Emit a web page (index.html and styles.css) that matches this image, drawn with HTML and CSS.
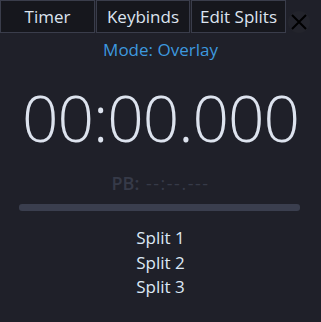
FILE: index.html
```html
<!DOCTYPE html>
<html>
<head>
<meta charset="utf-8">
<link rel="stylesheet" href="styles.css">
</head>
<body>
<div class="app">
  <div class="topbar">
    <div class="tabs">
      <div class="tab tab-a">Timer</div>
      <div class="tab tab-b">Keybinds</div>
      <div class="tab tab-c">Edit Splits</div>
    </div>
    <div class="close">
      <svg width="22" height="22" viewBox="0 0 22 22"><path d="M4 4 L18 18 M18 4 L4 18" stroke="#000" stroke-width="2" fill="none"/></svg>
    </div>
  </div>
  <div class="mode">Mode: Overlay</div>
  <div class="timer">00:00.000</div>
  <div class="pb"><b>PB:</b> <span class="pb-time">--:--.---</span></div>
  <div class="bar"></div>
  <div class="splits">
    <div class="split">Split 1</div>
    <div class="split">Split 2</div>
    <div class="split">Split 3</div>
  </div>
</div>
</body>
</html>
```
FILE: styles.css
```css
html, body {
  margin: 0;
  padding: 0;
  background: #1f2029;
  width: 321px;
  height: 322px;
  overflow: hidden;
}
.app {
  font-family: "Open Sans", "Noto Sans", sans-serif;
  color: #dde4f0;
}
.topbar {
  display: flex;
  align-items: flex-start;
}
.tabs {
  display: flex;
  gap: 1px;
}
.tab {
  box-sizing: border-box;
  height: 33px;
  border: 1px solid #3a3d4b;
  background: #16171d;
  font-size: 17px;
  display: flex;
  align-items: center;
  justify-content: center;
}
.tab-a { width: 95px; }
.tab-b { width: 94px; }
.tab-c { width: 95px; }
.close {
  margin-top: 11px;
  margin-left: 2px;
  width: 22px;
  height: 22px;
  border-radius: 50%;
  background: #23242c;
  display: flex;
}
.mode {
  text-align: center;
  color: #3d98df;
  font-size: 17px;
  margin-top: 5px;
  line-height: 24px;
}
.timer {
  text-align: center;
  font-size: 64px;
  font-weight: 300;
  letter-spacing: -1px;
  line-height: 80px;
  margin-top: 16px;
  color: #dde3ee;
}
.pb {
  text-align: center;
  font-size: 18px;
  color: #363a48;
  margin-top: 13px;
  line-height: 24px;
}
.pb b { font-weight: 600; }
.pb-time {
  letter-spacing: 1.5px;
  margin-left: 2px;
}
.bar {
  margin: 9px 21px 0 19px;
  height: 7px;
  border-radius: 3px;
  background: #3a3e4e;
}
.splits {
  margin-top: 15px;
  text-align: center;
  font-size: 17px;
  color: #dde8f5;
}
.split {
  line-height: 24.5px;
}
```
